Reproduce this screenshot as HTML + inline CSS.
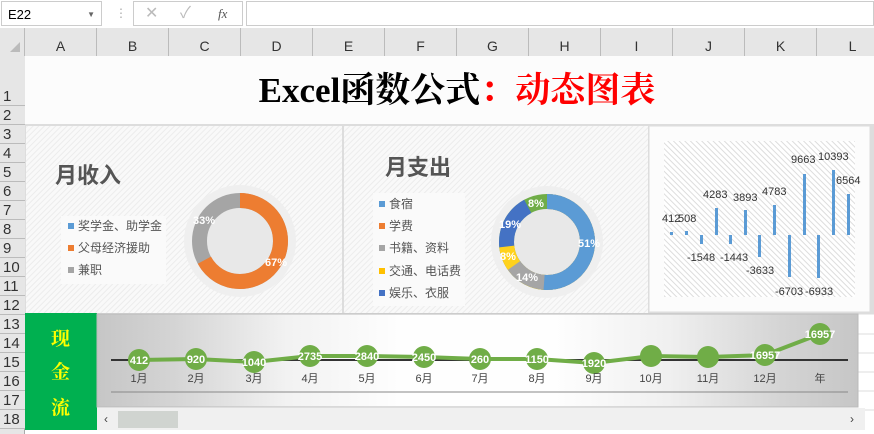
<!DOCTYPE html>
<html><head><meta charset="utf-8"><style>
body{margin:0;width:874px;height:434px;overflow:hidden;background:#fff;font-family:"Liberation Sans","Noto Sans CJK SC",sans-serif;position:relative}
.a{position:absolute}
.col{position:absolute;top:28px;height:28px;line-height:36px;text-align:center;font-size:14px;color:#333;border-right:1px solid #bbb;box-sizing:border-box}
.row{position:absolute;left:0;width:25px;text-align:left;padding-left:3px;font-size:15px;color:#333;border-bottom:1px solid #bbb;box-sizing:border-box;background:#e6e6e6;display:flex;align-items:flex-end;line-height:17px}
</style></head><body>
<div class="a" style="left:0;top:0;width:874px;height:28px;background:#fff;border-bottom:1px solid #ccc"></div>
<div class="a" style="left:1px;top:1px;width:101px;height:25px;border:1px solid #ccc;font-size:13px;line-height:25px;padding-left:6px;box-sizing:border-box">E22<span style="position:absolute;right:6px;top:0;font-size:8px;color:#666">▼</span></div>
<div class="a" style="left:115px;top:6px;color:#aaa;font-size:12px">⋮</div>
<div class="a" style="left:133px;top:1px;width:110px;height:25px;border:1px solid #ccc;box-sizing:border-box;color:#bbb;font-size:16px;line-height:24px"><span style="position:absolute;left:11px">✕</span><span style="position:absolute;left:46px">✓</span><span style="position:absolute;left:84px;font-family:'Liberation Serif';font-style:italic;font-size:13px;color:#555">fx</span></div>
<div class="a" style="left:246px;top:1px;width:628px;height:25px;border:1px solid #ccc;box-sizing:border-box"></div>
<div class="a" style="left:0;top:28px;width:874px;height:28px;background:#e6e6e6;border-bottom:1px solid #aaa"></div>
<div class="a" style="left:0;top:28px;width:25px;height:28px;border-right:1px solid #bbb;box-sizing:border-box"><div style="position:absolute;right:4px;bottom:4px;width:0;height:0;border-left:10px solid transparent;border-bottom:10px solid #bbb"></div></div>
<div class="col" style="left:25px;width:72px">A</div><div class="col" style="left:97px;width:72px">B</div><div class="col" style="left:169px;width:72px">C</div><div class="col" style="left:241px;width:72px">D</div><div class="col" style="left:313px;width:72px">E</div><div class="col" style="left:385px;width:72px">F</div><div class="col" style="left:457px;width:72px">G</div><div class="col" style="left:529px;width:72px">H</div><div class="col" style="left:601px;width:72px">I</div><div class="col" style="left:673px;width:72px">J</div><div class="col" style="left:745px;width:72px">K</div><div class="col" style="left:817px;width:72px">L</div>
<div class="a" style="left:0;top:56px;width:25px;height:378px;background:#e6e6e6;border-right:1px solid #aaa;box-sizing:border-box"></div>
<div class="row" style="top:56px;height:50px">1</div><div class="row" style="top:106px;height:19px">2</div>
<div class="row" style="top:125px;height:19px">3</div><div class="row" style="top:144px;height:19px">4</div><div class="row" style="top:163px;height:19px">5</div><div class="row" style="top:182px;height:19px">6</div><div class="row" style="top:201px;height:19px">7</div><div class="row" style="top:220px;height:19px">8</div><div class="row" style="top:239px;height:19px">9</div><div class="row" style="top:258px;height:19px">10</div><div class="row" style="top:277px;height:19px">11</div><div class="row" style="top:296px;height:19px">12</div>
<div class="row" style="top:315px;height:19px">13</div><div class="row" style="top:334px;height:19px">14</div><div class="row" style="top:353px;height:19px">15</div><div class="row" style="top:372px;height:19px">16</div><div class="row" style="top:391px;height:19px">17</div><div class="row" style="top:410px;height:19px">18</div>
<div class="a" style="left:25px;top:56px;width:849px;height:68px;background:#fcfcfc"></div>
<div class="a" style="left:25px;top:66px;width:864px;text-align:center;font-family:'Liberation Serif','Noto Serif CJK SC',serif;font-weight:bold;font-size:35px;line-height:50px"><span style="color:#000">Excel函数公式</span><span style="color:#f00">：动态图表</span></div>
<svg class="a" style="left:0;top:0" width="874" height="434">
<defs>
<pattern id="h" width="4" height="4" patternUnits="userSpaceOnUse" patternTransform="rotate(45)"><rect width="4" height="4" fill="#f9f9f9"/><rect width="1" height="4" fill="#ececec"/></pattern>
<pattern id="h2" width="4" height="4" patternUnits="userSpaceOnUse" patternTransform="rotate(-45)"><rect width="4" height="4" fill="#fff"/><rect width="1" height="4" fill="#ddd"/></pattern>
<linearGradient id="g" x1="0" x2="1"><stop offset="0" stop-color="#c6c6c6"/><stop offset="0.1" stop-color="#d4d4d4"/><stop offset="0.25" stop-color="#f2f2f2"/><stop offset="0.4" stop-color="#fefefe"/><stop offset="0.6" stop-color="#fefefe"/><stop offset="0.75" stop-color="#f0f0f0"/><stop offset="0.9" stop-color="#d4d4d4"/><stop offset="1" stop-color="#c6c6c6"/></linearGradient>
</defs>
<g stroke="#ddd"><line x1="858" y1="314" x2="874" y2="314"/><line x1="858" y1="334" x2="874" y2="334"/><line x1="858" y1="353" x2="874" y2="353"/><line x1="858" y1="372" x2="874" y2="372"/><line x1="858" y1="391" x2="874" y2="391"/><line x1="858" y1="410" x2="874" y2="410"/></g>
<rect x="25" y="124" width="849" height="190" fill="#ddd"/>
<rect x="26" y="126" width="316" height="187" fill="url(#h)"/>
<rect x="344" y="126" width="304" height="187" fill="url(#h)"/>
<rect x="649" y="126" width="221" height="186" fill="#fcfcfc" stroke="#ddd"/>
<rect x="664" y="141" width="191" height="156" fill="url(#h2)"/>
<text x="55" y="183" font-size="22" fill="#555" font-weight="bold">月收入</text>
<rect x="61" y="216" width="105" height="68" fill="#fafafa"/>
<rect x="68" y="223" width="6" height="6" fill="#5b9bd5"/><text x="78" y="230" font-size="12" fill="#555">奖学金、助学金</text>
<rect x="68" y="245" width="6" height="6" fill="#ed7d31"/><text x="78" y="252" font-size="12" fill="#555">父母经济援助</text>
<rect x="68" y="267" width="6" height="6" fill="#a5a5a5"/><text x="78" y="274" font-size="12" fill="#555">兼职</text>
<circle cx="240" cy="241" r="56" fill="#efefef"/><circle cx="240" cy="241" r="33" fill="#e8e8e8"/>
<circle cx="240" cy="241" r="40.5" fill="none" stroke="#a5a5a5" stroke-width="15"/>
<circle cx="240" cy="241" r="40.5" fill="none" stroke="#ed7d31" stroke-width="15" stroke-dasharray="170.5 300" transform="rotate(-90 240 241)"/>
<text x="193" y="224" font-size="11" fill="#fff" font-weight="bold">33%</text>
<text x="265" y="266" font-size="11" fill="#fff" font-weight="bold">67%</text>
<text x="385" y="175" font-size="22" fill="#555" font-weight="bold">月支出</text>
<rect x="373" y="193" width="92" height="113" fill="#fafafa"/>
<rect x="379" y="201" width="6" height="6" fill="#5b9bd5"/><text x="389" y="208" font-size="12" fill="#555">食宿</text>
<rect x="379" y="223" width="6" height="6" fill="#ed7d31"/><text x="389" y="230" font-size="12" fill="#555">学费</text>
<rect x="379" y="245" width="6" height="6" fill="#a5a5a5"/><text x="389" y="252" font-size="12" fill="#555">书籍、资料</text>
<rect x="379" y="268" width="6" height="6" fill="#ffc000"/><text x="389" y="275" font-size="12" fill="#555">交通、电话费</text>
<rect x="379" y="290" width="6" height="6" fill="#4472c4"/><text x="389" y="297" font-size="12" fill="#555">娱乐、衣服</text>
<circle cx="547" cy="242" r="56" fill="#efefef"/><circle cx="547" cy="242" r="33" fill="#e8e8e8"/>
<g transform="rotate(-90 547 242)" fill="none" stroke-width="15">
<circle cx="547" cy="242" r="40.5" stroke="#70ad47"/>
<circle cx="547" cy="242" r="40.5" stroke="#4472c4" stroke-dasharray="234 300"/>
<circle cx="547" cy="242" r="40.5" stroke="#ffd21c" stroke-dasharray="186 300"/>
<circle cx="547" cy="242" r="40.5" stroke="#a5a5a5" stroke-dasharray="165.5 300"/>
<circle cx="547" cy="242" r="40.5" stroke="#5b9bd5" stroke-dasharray="130 300"/>
</g>
<g font-size="11" fill="#fff" font-weight="bold"><text x="528" y="207">8%</text><text x="499" y="228">19%</text><text x="500" y="260">8%</text><text x="516" y="281">14%</text><text x="578" y="247">51%</text></g>
<g fill="#5b9bd5">
<rect x="670" y="232" width="3" height="3"/><rect x="685" y="231" width="3" height="4"/><rect x="700" y="235" width="3" height="9"/><rect x="715" y="208" width="3" height="27"/><rect x="729" y="235" width="3" height="9"/><rect x="744" y="210" width="3" height="25"/><rect x="758" y="235" width="3" height="22"/><rect x="773" y="205" width="3" height="30"/><rect x="788" y="235" width="3" height="42"/><rect x="803" y="174" width="3" height="61"/><rect x="817" y="235" width="3" height="43"/><rect x="832" y="170" width="3" height="65"/><rect x="847" y="194" width="3" height="41"/>
</g>
<g font-size="11" fill="#333">
<text x="662" y="222">412</text><text x="678" y="222">508</text><text x="687" y="261">-1548</text><text x="720" y="261">-1443</text><text x="703" y="198">4283</text><text x="733" y="201">3893</text><text x="746" y="274">-3633</text><text x="762" y="195">4783</text><text x="775" y="295">-6703</text><text x="805" y="295">-6933</text><text x="791" y="163">9663</text><text x="818" y="160">10393</text><text x="836" y="184">6564</text>
</g>
<rect x="25" y="313" width="72" height="117" fill="#00b050"/>
<g font-family="Liberation Serif,Noto Serif CJK SC,serif" font-size="19" fill="#ffff00" font-weight="bold"><text x="51" y="345">现</text><text x="51" y="378">金</text><text x="51" y="414">流</text></g>
<rect x="97" y="314" width="761" height="93" fill="url(#g)" stroke="#bbb"/>
<line x1="111" y1="360" x2="848" y2="360" stroke="#333" stroke-width="2"/>
<line x1="111" y1="392" x2="848" y2="392" stroke="#888"/>
<polyline points="139,360 196,359 254,362 310,356 367,356 424,357 480,359 537,359 594,363 651,356 708,357 765,355 820,334" fill="none" stroke="#70ad47" stroke-width="4"/>
<g fill="#70ad47"><circle cx="139" cy="360" r="11"/><circle cx="196" cy="359" r="11"/><circle cx="254" cy="362" r="11"/><circle cx="310" cy="356" r="11"/><circle cx="367" cy="356" r="11"/><circle cx="424" cy="357" r="11"/><circle cx="480" cy="359" r="11"/><circle cx="537" cy="359" r="11"/><circle cx="594" cy="363" r="11"/><circle cx="651" cy="356" r="11"/><circle cx="708" cy="357" r="11"/><circle cx="765" cy="355" r="11"/><circle cx="820" cy="334" r="11"/></g>
<g font-size="11" fill="#fff" font-weight="bold" text-anchor="middle"><text x="139" y="364">412</text><text x="196" y="363">920</text><text x="254" y="366">1040</text><text x="310" y="360">2735</text><text x="367" y="360">2840</text><text x="424" y="361">2450</text><text x="480" y="363">260</text><text x="537" y="363">1150</text><text x="594" y="367">1920</text><text x="765" y="359">16957</text><text x="820" y="338">16957</text></g>
<g font-size="11" fill="#444" text-anchor="middle"><text x="139" y="382">1月</text><text x="196" y="382">2月</text><text x="254" y="382">3月</text><text x="310" y="382">4月</text><text x="367" y="382">5月</text><text x="424" y="382">6月</text><text x="480" y="382">7月</text><text x="537" y="382">8月</text><text x="594" y="382">9月</text><text x="651" y="382">10月</text><text x="708" y="382">11月</text><text x="765" y="382">12月</text><text x="820" y="382">年</text></g>
<rect x="97" y="408" width="768" height="22" fill="#f0f0f0"/>
<rect x="118" y="411" width="60" height="17" fill="#d0d4d0"/>
<text x="104" y="423" font-size="12" fill="#444">‹</text><text x="850" y="423" font-size="12" fill="#444">›</text>
</svg>
</body></html>
